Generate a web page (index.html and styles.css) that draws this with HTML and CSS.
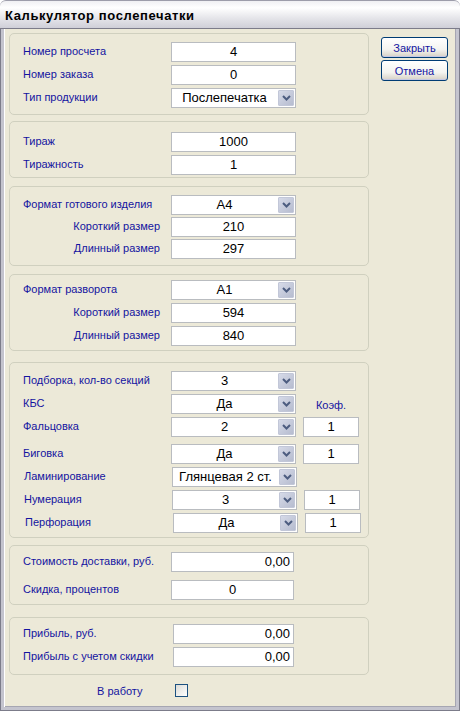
FILE: index.html
```html
<!DOCTYPE html>
<html>

<head>
    <meta charset='utf-8'>
    <title>Калькулятор послепечатки</title>
    <link rel="stylesheet" href="styles.css">
</head>

<body>
    <div class="window">
        <div class="titlebar">Калькулятор послепечатки</div>
        <div class="frame">
            <div class="groups">
                <!-- заказ -->
                <div class="group g_order">
                    <div class="row">
                        <label class="label">Номер просчета</label>
                        <div class="field">4</div>
                    </div>
                    <div class="row">
                        <label class="label">Номер заказа</label>
                        <div class="field">0</div>
                    </div>
                    <div class="row">
                        <label class="label">Тип продукции</label>
                        <div class="field select"><span class="value">Послепечатка</span><span class="arrow"><svg width="9" height="6" viewBox="0 0 9 6"><path d="M1 1l3.5 3.5L8 1" /></svg></span></div>
                    </div>
                </div>

                <!-- тираж -->
                <div class="group g_run">
                    <div class="row">
                        <label class="label">Тираж</label>
                        <div class="field">1000</div>
                    </div>
                    <div class="row">
                        <label class="label">Тиражность</label>
                        <div class="field">1</div>
                    </div>
                </div>

                <!-- формат изделия -->
                <div class="group g_format">
                    <div class="row">
                        <label class="label">Формат готового изделия</label>
                        <div class="field select"><span class="value">А4</span><span class="arrow"><svg width="9" height="6" viewBox="0 0 9 6"><path d="M1 1l3.5 3.5L8 1" /></svg></span></div>
                    </div>
                    <div class="row">
                        <label class="label sub">Короткий размер</label>
                        <div class="field">210</div>
                    </div>
                    <div class="row">
                        <label class="label sub">Длинный размер</label>
                        <div class="field">297</div>
                    </div>
                </div>

                <!-- формат разворота -->
                <div class="group g_spread">
                    <div class="row">
                        <label class="label">Формат разворота</label>
                        <div class="field select"><span class="value">А1</span><span class="arrow"><svg width="9" height="6" viewBox="0 0 9 6"><path d="M1 1l3.5 3.5L8 1" /></svg></span></div>
                    </div>
                    <div class="row">
                        <label class="label sub">Короткий размер</label>
                        <div class="field">594</div>
                    </div>
                    <div class="row">
                        <label class="label sub">Длинный размер</label>
                        <div class="field">840</div>
                    </div>
                </div>

                <!-- операции -->
                <div class="group g_ops">
                    <div class="row">
                        <label class="label">Подборка, кол-во секций</label>
                        <div class="field select"><span class="value">3</span><span class="arrow"><svg width="9" height="6" viewBox="0 0 9 6"><path d="M1 1l3.5 3.5L8 1" /></svg></span></div>
                    </div>
                    <div class="row">
                        <label class="label">КБС</label>
                        <div class="field select"><span class="value">Да</span><span class="arrow"><svg width="9" height="6" viewBox="0 0 9 6"><path d="M1 1l3.5 3.5L8 1" /></svg></span></div>
                        <span class="coef_title">Коэф.</span>
                    </div>
                    <div class="row">
                        <label class="label">Фальцовка</label>
                        <div class="field select"><span class="value">2</span><span class="arrow"><svg width="9" height="6" viewBox="0 0 9 6"><path d="M1 1l3.5 3.5L8 1" /></svg></span></div>
                        <div class="field coef">1</div>
                    </div>
                    <div class="row spaced">
                        <label class="label">Биговка</label>
                        <div class="field select"><span class="value">Да</span><span class="arrow"><svg width="9" height="6" viewBox="0 0 9 6"><path d="M1 1l3.5 3.5L8 1" /></svg></span></div>
                        <div class="field coef">1</div>
                    </div>
                    <div class="row shift1">
                        <label class="label">Ламинирование</label>
                        <div class="field select"><span class="value">Глянцевая 2 ст.</span><span class="arrow"><svg width="9" height="6" viewBox="0 0 9 6"><path d="M1 1l3.5 3.5L8 1" /></svg></span></div>
                    </div>
                    <div class="row shift1">
                        <label class="label">Нумерация</label>
                        <div class="field select"><span class="value">3</span><span class="arrow"><svg width="9" height="6" viewBox="0 0 9 6"><path d="M1 1l3.5 3.5L8 1" /></svg></span></div>
                        <div class="field coef">1</div>
                    </div>
                    <div class="row shift2">
                        <label class="label">Перфорация</label>
                        <div class="field select"><span class="value">Да</span><span class="arrow"><svg width="9" height="6" viewBox="0 0 9 6"><path d="M1 1l3.5 3.5L8 1" /></svg></span></div>
                        <div class="field coef">1</div>
                    </div>
                </div>

                <!-- доставка и скидка -->
                <div class="group g_cost">
                    <div class="row">
                        <label class="label">Стоимость доставки, руб.</label>
                        <div class="field money">0,00</div>
                    </div>
                    <div class="row">
                        <label class="label">Скидка, процентов</label>
                        <div class="field">0</div>
                    </div>
                </div>

                <!-- прибыль -->
                <div class="group g_profit">
                    <div class="row">
                        <label class="label">Прибыль, руб.</label>
                        <div class="field money">0,00</div>
                    </div>
                    <div class="row">
                        <label class="label">Прибыль с учетом скидки</label>
                        <div class="field money">0,00</div>
                    </div>
                </div>

                <div class="to_work">
                    <label class="label">В работу</label>
                    <span class="checkbox"></span>
                </div>
            </div>

            <div class="actions">
                <button class="btn">Закрыть</button>
                <button class="btn">Отмена</button>
            </div>
        </div>
    </div>
</body>

</html>
```

FILE: styles.css
```css
* {
    margin: 0;
    padding: 0;
    box-sizing: border-box;
}

body {
    background: #ffffff;
    font-family: "Liberation Sans", Arial, sans-serif;
}

.window {
    width: 460px;
    height: 711px;
    display: flex;
    flex-direction: column;
}

.titlebar {
    height: 29px;
    padding: 7px 0 0 5px;
    font-size: 13px;
    letter-spacing: 0.6px;
    font-weight: bold;
    color: #000000;
    border-radius: 6px 6px 0 0;
    border-top: 1px solid #9d9daa;
    border-bottom: 1px solid #7c7c8a;
    background: linear-gradient(#f0f0f3 0%, #ffffff 25%, #e4e4e9 65%, #cfcfd8 100%);
}

.frame {
    flex: 1;
    display: flex;
    background: #ece9d8;
    border: 4px solid #c4c4ce;
    border-top: none;
    box-shadow: inset 1px 0 #ffffff, inset -1px -1px #a6a6b2;
    position: relative;
}

.frame::before {
    content: "";
    position: absolute;
    left: -4px;
    right: -4px;
    bottom: -4px;
    top: 0;
    border: 1px solid #7c7c8a;
    border-top: none;
    pointer-events: none;
}

.groups {
    width: 365px;
    padding: 4px 0 0 5px;
}

.group {
    width: 360px;
    border: 1px solid #d0d0bf;
    border-radius: 5px;
    display: flex;
    flex-direction: column;
    gap: 3px;
}

.g_order {
    padding: 8px 0 6px;
}

.g_run {
    margin-top: 6px;
    padding: 10px 0 2px;
}

.g_format {
    margin-top: 8px;
    padding: 8px 0 6px;
    gap: 2px;
}

.g_spread {
    margin-top: 8px;
    padding: 5px 0 4px;
}

.g_ops {
    margin-top: 11px;
    padding: 8px 0 4px;
}

.g_cost {
    margin-top: 7px;
    padding: 6px 0 4px;
    gap: 8px;
}

.g_profit {
    margin-top: 12px;
    padding: 6px 0 7px;
}

.row {
    height: 20px;
    display: flex;
    align-items: center;
}

.row.spaced {
    margin-top: 4px;
}

.row.shift1 {
    padding-left: 1px;
}

.row.shift2 {
    padding-left: 2px;
}

.label {
    width: 161px;
    flex: none;
    padding-left: 13px;
    padding-bottom: 2px;
    font-size: 11px;
    color: #1414a0;
}

.label.sub {
    text-align: right;
    padding-right: 11px;
}

.field {
    width: 125px;
    height: 20px;
    flex: none;
    background: #ffffff;
    border: 1px solid #b9bcc0;
    font-size: 13px;
    line-height: 18px;
    text-align: center;
    color: #000000;
}

.g_cost .field {
    width: 123px;
}

.g_profit .field {
    width: 121px;
    margin-left: 2px;
}

.field.money {
    text-align: right;
    padding-right: 3px;
}

.select {
    display: flex;
}

.select .value {
    flex: 1;
    text-align: center;
}

.arrow {
    width: 16px;
    margin: 1px;
    display: flex;
    align-items: center;
    justify-content: center;
    border: 1px solid #c2c7d8;
    border-radius: 1px;
    background: linear-gradient(135deg, #d6dae8, #b6bccf);
}

.arrow path {
    fill: none;
    stroke: #4d5d80;
    stroke-width: 2;
}

.coef {
    width: 56px;
    margin-left: 7px;
}

.coef_title {
    width: 56px;
    margin-left: 7px;
    text-align: center;
    font-size: 11px;
    color: #1414a0;
    padding-top: 1px;
}

.to_work {
    height: 13px;
    margin-top: 9px;
    display: flex;
    align-items: center;
}

.to_work .label {
    width: auto;
    padding-left: 88px;
    padding-bottom: 0;
}

.checkbox {
    width: 13px;
    height: 13px;
    margin-left: 33px;
    border: 1px solid #1c5180;
    background: linear-gradient(135deg, #dcdcd7, #ffffff);
}

.actions {
    padding: 8px 0 0 12px;
    display: flex;
    flex-direction: column;
    gap: 2px;
}

.btn {
    width: 67px;
    height: 21px;
    font-family: "Liberation Sans", Arial, sans-serif;
    font-size: 11px;
    color: #1414a0;
    border: 1px solid #003c74;
    border-radius: 3px;
    background: linear-gradient(#ffffff 0%, #f4f4f0 60%, #d6d0c5 100%);
    box-shadow: inset 0 -1px 0 #c4c8e4, inset 0 1px 0 #ffffff;
}
```
